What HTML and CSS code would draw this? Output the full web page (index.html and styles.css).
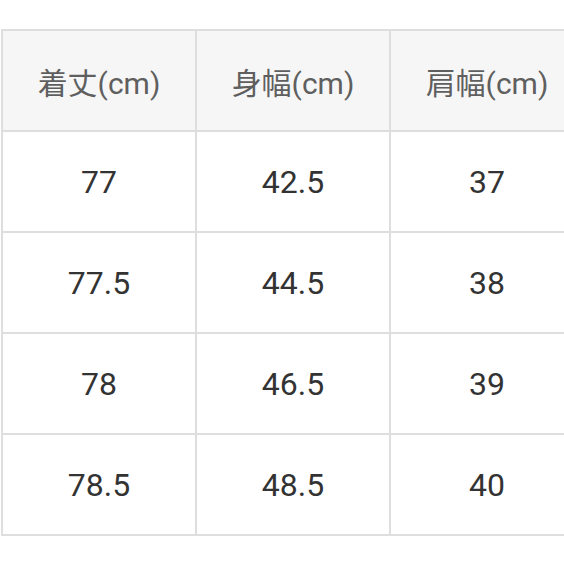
FILE: index.html
```html
<!DOCTYPE html>
<html lang="ja">
<head>
<meta charset="utf-8">
<title>サイズ表</title>
<link rel="stylesheet" href="styles.css">
</head>
<body>
<div class="frame">
<table class="size-table">
  <thead>
    <tr><th>着丈(cm)</th><th>身幅(cm)</th><th>肩幅(cm)</th></tr>
  </thead>
  <tbody>
    <tr><td>77</td><td>42.5</td><td>37</td></tr>
    <tr><td>77.5</td><td>44.5</td><td>38</td></tr>
    <tr><td>78</td><td>46.5</td><td>39</td></tr>
    <tr><td>78.5</td><td>48.5</td><td>40</td></tr>
  </tbody>
</table>
</div>
</body>
</html>
```
FILE: styles.css
```css
html, body {
  margin: 0;
  padding: 0;
  background: #ffffff;
  overflow: hidden;
}
.frame {
  width: 564px;
  height: 564px;
  overflow: hidden;
  padding-top: 29px;
  padding-left: 1px;
  box-sizing: border-box;
}
.size-table {
  border-collapse: collapse;
  table-layout: fixed;
  width: 584px;
  font-family: Roboto, "Noto Sans CJK JP", sans-serif;
  font-size: 32px;
  color: #333333;
}
.size-table th,
.size-table td {
  width: 192px;
  height: 99px;
  padding: 0;
  border: 2px solid #dedede;
  text-align: center;
  vertical-align: middle;
  box-sizing: content-box;
}
.size-table th {
  font-weight: 400;
  font-size: 30px;
  color: #5f5f5f;
  background: #f6f6f6;
}
```
